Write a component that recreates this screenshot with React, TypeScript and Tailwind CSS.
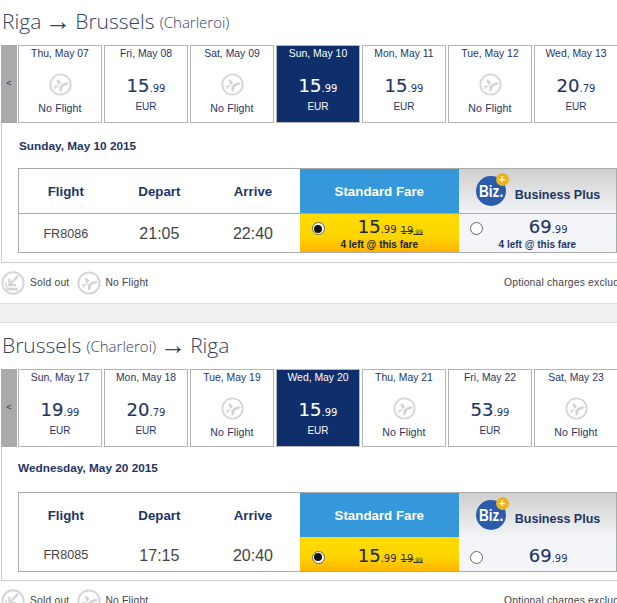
type Day = {
  label: string;
  price?: string;
  cents?: string;
  selected?: boolean;
};

type Leg = {
  from: string;
  fromNote?: string;
  to: string;
  toNote?: string;
  days: Day[];
  heading: string;
  headingClass: string;
  flight: string;
  depart: string;
  arrive: string;
  showLeft: boolean;
};

const legs: Leg[] = [
  {
    from: "Riga",
    to: "Brussels",
    toNote: "(Charleroi)",
    days: [
      { label: "Thu, May 07" },
      { label: "Fri, May 08", price: "15", cents: ".99" },
      { label: "Sat, May 09" },
      { label: "Sun, May 10", price: "15", cents: ".99", selected: true },
      { label: "Mon, May 11", price: "15", cents: ".99" },
      { label: "Tue, May 12" },
      { label: "Wed, May 13", price: "20", cents: ".79" },
    ],
    heading: "Sunday, May 10 2015",
    headingClass: "h-[45px] pl-[17px] pt-[15px]",
    flight: "FR8086",
    depart: "21:05",
    arrive: "22:40",
    showLeft: true,
  },
  {
    from: "Brussels",
    fromNote: "(Charleroi)",
    to: "Riga",
    days: [
      { label: "Sun, May 17", price: "19", cents: ".99" },
      { label: "Mon, May 18", price: "20", cents: ".79" },
      { label: "Tue, May 19" },
      { label: "Wed, May 20", price: "15", cents: ".99", selected: true },
      { label: "Thu, May 21" },
      { label: "Fri, May 22", price: "53", cents: ".99" },
      { label: "Sat, May 23" },
    ],
    heading: "Wednesday, May 20 2015",
    headingClass: "h-[45px] pl-[16px] pt-[13px]",
    flight: "FR8085",
    depart: "17:15",
    arrive: "20:40",
    showLeft: false,
  },
];

function NoFlightIcon({ size }: { size: number }) {
  return (
    <svg width={size} height={size} viewBox="0 0 24 24" fill="none">
      <circle cx="12" cy="12" r="10.6" stroke="#d6d7da" strokeWidth="2" />
      <path
        d="M3.6 13.4l2.6.2 3.6-1.2-2.2-5 2-.5 4 4.4 4.2-1.3c1.4-.4 2.5 0 2.6.8.1.7-.6 1.3-1.7 1.7l-4 1.4-1.8 5.2-2 .5.1-4.7-3.3 1.1-1.6 1.1-.8-.6 1-1.6z"
        fill="#d2d3d6"
      />
      <path d="M18.6 4.6L5.4 19" stroke="#fff" strokeWidth="1.6" />
    </svg>
  );
}

function SoldOutIcon() {
  return (
    <svg width="24" height="24" viewBox="0 0 24 24" fill="none">
      <circle cx="12" cy="12" r="10.7" stroke="#d6d7da" strokeWidth="2" />
      <path d="M17 5L9.5 13" stroke="#d2d3d6" strokeWidth="2.2" />
      <path d="M8.4 7.6v6.6h6.6" stroke="#d2d3d6" strokeWidth="2.2" />
      <path d="M5 10.5l1.6 6.3h10v2.8H5.8L3.8 12z" fill="#d2d3d6" />
    </svg>
  );
}

function DayCard({ day }: { day: Day }) {
  const box = day.selected
    ? "bg-[#0f2e6c] text-white"
    : "bg-white text-[#1f3566]";

  return (
    <div
      className={`flex h-[78px] w-[84px] shrink-0 flex-col items-center border border-[#b4b4b4] ${box}`}
    >
      <span className="mt-[1px] h-[13px] text-[10.4px] leading-[13px]">
        {day.label}
      </span>
      {day.price ? (
        <>
          <span className="mt-[14px] h-[24px] font-['DejaVu_Sans'] text-[18px] leading-[24px] [-webkit-text-stroke:0.15px]">
            {day.price}
            <span className="text-[10px] [-webkit-text-stroke:0px]">{day.cents}</span>
          </span>
          <span className="mt-[3px] text-[10px] leading-[12px]">EUR</span>
        </>
      ) : (
        <>
          <span className="mt-[13px] h-[24px]">
            <NoFlightIcon size={23} />
          </span>
          <span className="mt-[5px] text-[10.6px] leading-[12px] tracking-[0.1px]">
            No Flight
          </span>
        </>
      )}
    </div>
  );
}

function Radio({ checked, className }: { checked?: boolean; className: string }) {
  return (
    <span
      className={`flex h-[13px] w-[13px] shrink-0 items-center justify-center rounded-full border border-[#666] bg-white ${className}`}
    >
      {checked && <span className="h-[8px] w-[8px] rounded-full bg-[#111]" />}
    </span>
  );
}

function FareTable({ leg }: { leg: Leg }) {
  const rowStyle = leg.showLeft ? "h-[39px] border-t border-[#aaa]" : "h-[34px]";
  const textPad = leg.showLeft ? "pt-[2px]" : "pt-[3px]";
  const farePad = leg.showLeft ? "pt-[3px]" : "pt-[6px]";
  const cols = "flex w-[93.6px] items-center justify-center";

  return (
    <div className="w-[599px] border border-[#aaa]">
      <div className="flex h-[44px]">
        <div className={`${cols} pt-[2px] text-[13.3px] font-bold text-[#1f3566]`}>Flight</div>
        <div className={`${cols} pt-[2px] text-[13.3px] font-bold text-[#1f3566]`}>Depart</div>
        <div className={`${cols} pt-[2px] text-[13.3px] font-bold text-[#1f3566]`}>Arrive</div>
        <div className="flex w-[159px] items-center justify-center bg-[#3498db] pt-[2px] text-[13.3px] font-bold text-white">
          Standard Fare
        </div>
        <div className="flex flex-1 items-center bg-gradient-to-b from-[#cfcfcf] to-[#f3f4f6] pl-[17px]">
          <div className="relative h-[30px] w-[30px] shrink-0 rounded-full bg-[#2a5cab] text-center text-[17px] font-bold leading-[32px] text-white">
            <span className="inline-block scale-x-[0.8]">Biz.</span>
            <span className="absolute -top-[3px] -right-[3px] h-[13px] w-[13px] rounded-full bg-[#efb21c] text-[11px] leading-[12px]">
              +
            </span>
          </div>
          <span className="ml-[9px] mt-[9px] text-[12.5px] font-bold text-[#1f3566]">
            Business Plus
          </span>
        </div>
      </div>
      <div className={`flex ${rowStyle} text-[#444]`}>
        <div className={`${cols} ${textPad} text-[12.6px]`}>{leg.flight}</div>
        <div className={`${cols} ${textPad} text-[16px]`}>{leg.depart}</div>
        <div className={`${cols} ${textPad} text-[16px]`}>{leg.arrive}</div>
        <div className={`flex w-[159px] flex-col justify-center bg-gradient-to-b from-[#ffdc00] via-[#ffd500] via-60% to-[#ffb400] ${farePad}`}>
          <div className="flex h-[20px] items-center">
            <Radio checked className="ml-[12px]" />
            <span className="ml-[33px] font-['DejaVu_Sans'] text-[18px] leading-[20px] text-[#1d2a44] [-webkit-text-stroke:0.15px]">
              15<span className="text-[10px] [-webkit-text-stroke:0px]">.99</span>
            </span>
            <span className="ml-[4px] mt-[3px] font-['DejaVu_Sans'] text-[10px] text-[#333] line-through">
              19<span className="text-[6px]">.99</span>
            </span>
          </div>
          {leg.showLeft && (
            <div className="text-center text-[10px] font-bold leading-[12px] text-[#222]">
              4 left @ this fare
            </div>
          )}
        </div>
        <div className={`flex flex-1 flex-col justify-center bg-[#f3f5f9] ${farePad}`}>
          <div className="flex h-[20px] items-center">
            <Radio className="ml-[11px]" />
            <span className="ml-[46px] font-['DejaVu_Sans'] text-[18px] leading-[20px] text-[#1f3566] [-webkit-text-stroke:0.15px]">
              69<span className="text-[10px] [-webkit-text-stroke:0px]">.99</span>
            </span>
          </div>
          {leg.showLeft && (
            <div className="text-center text-[10px] font-bold leading-[12px] text-[#1f3566]">
              4 left @ this fare
            </div>
          )}
        </div>
      </div>
    </div>
  );
}

function Legend() {
  return (
    <div className="flex h-[40px] items-center whitespace-nowrap text-[10.3px] text-[#444]">
      <span className="ml-[1px]">
        <SoldOutIcon />
      </span>
      <span className="ml-[5px] tracking-[0.2px]">Sold out</span>
      <span className="ml-[8px]">
        <NoFlightIcon size={24} />
      </span>
      <span className="ml-[4px] tracking-[0.2px]">No Flight</span>
      <span className="ml-auto w-[113px] shrink-0 overflow-hidden tracking-[0.2px]">
        Optional charges excluded
      </span>
    </div>
  );
}

function LegSection({ leg }: { leg: Leg }) {
  const bodyHeight = leg.showLeft ? "h-[140px]" : "h-[134px]";

  return (
    <section>
      <h2 className="flex h-[45px] items-start pl-[2px] pt-[7px] font-['Open_Sans'] text-[21px] font-light leading-[28px] text-[#33415f]">
        {leg.from}
        {leg.fromNote && <span className="ml-[5px] text-[15px] leading-[31px]">{leg.fromNote}</span>}
        <span className="mx-[4px] font-['Liberation_Sans'] text-[26px] leading-[28px]">→</span>
        {leg.to}
        {leg.toNote && <span className="ml-[5px] text-[15px] leading-[31px]">{leg.toNote}</span>}
      </h2>
      <div className="ml-[1px] flex">
        <div className="flex h-[78px] w-[16px] shrink-0 items-center justify-center bg-[#aaa] text-[9px] text-[#1f3566]">
          &lt;
        </div>
        <div className="ml-[1px] flex gap-[2px]">
          {leg.days.map((day) => (
            <DayCard key={day.label} day={day} />
          ))}
        </div>
      </div>
      <div className={`ml-[1px] border-b border-l border-[#ccc] ${bodyHeight}`}>
        <h3 className={`text-[11.8px] font-bold text-[#1f3566] ${leg.headingClass}`}>
          {leg.heading}
        </h3>
        <div className="pl-[16px]">
          <FareTable leg={leg} />
        </div>
      </div>
      <Legend />
    </section>
  );
}

export default function App() {
  return (
    <div className="h-[603px] w-[617px] overflow-hidden bg-white font-['Liberation_Sans',sans-serif]">
      <LegSection leg={legs[0]} />
      <div className="h-[20px] border-y border-[#ddd] bg-[#f1f1f1]" />
      <div className="mt-[1px]">
        <LegSection leg={legs[1]} />
      </div>
    </div>
  );
}
